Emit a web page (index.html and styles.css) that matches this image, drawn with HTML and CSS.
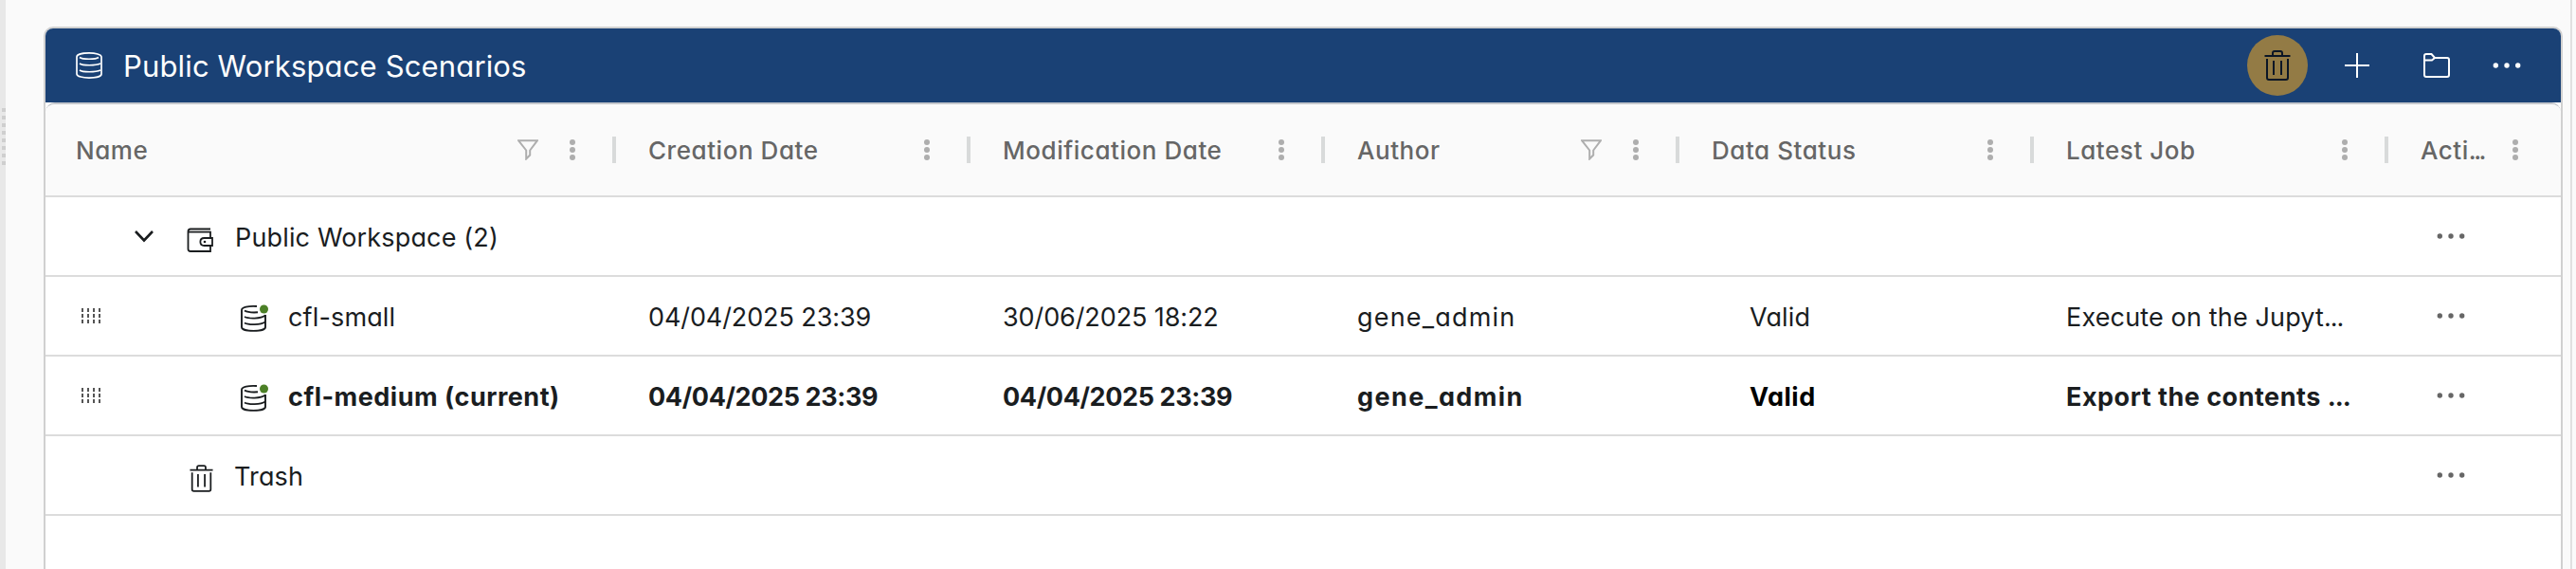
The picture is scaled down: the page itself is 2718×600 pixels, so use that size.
FILE: index.html
```
<!DOCTYPE html>
<html lang="en">
<head>
    <meta charset="UTF-8">
    <meta name="viewport" content="width=device-width, initial-scale=1">
    <title>Public Workspace Scenarios</title>
    <link rel="stylesheet" href="styles.css">
</head>
<body>
    <!-- icon sprites -->
    <svg class="sprites" width="0" height="0">
        <symbol id="i-trash" viewBox="0 0 28 32">
            <path d="M0.5 6H27.5M9 6V3Q9 1 11 1H17Q19 1 19 3V6M3 9V29Q3 31 5 31H23Q25 31 25 29V9M10 11V26M18 11V26"/>
        </symbol>
        <symbol id="i-db" viewBox="0 0 28 28">
            <path d="M1 5C1 -0.4 27 -0.4 27 5V23C27 28.4 1 28.4 1 23Z"/>
            <path d="M4 5.5C7 7.8 21 7.8 24 5.5M4 12C7 14.3 21 14.3 26 12M4 19C7 21.3 21 21.3 26 19"/>
        </symbol>
        <symbol id="i-dbok" viewBox="0 0 30 32">
            <path d="M18 4C9 3.4 2 5 2 8V26C2 31.2 27 31.2 27 26V13"/>
            <path d="M5 8.5C8 10.3 13 10.7 19 10.3M5 15C9 17.2 22 17.5 27 13.5M5 21.5C9 23.8 22 23.8 27 20.5"/>
            <circle class="ok" cx="25.5" cy="7" r="4.5"/>
        </symbol>
        <symbol id="i-wallet" viewBox="0 0 28 26">
            <path d="M25 1.5H4Q1.5 1.5 1.5 4V22.5Q1.5 25 4 25H25V19M1.5 4.7H25V11"/>
            <path d="M27 11H18.5C13 11 13 19 18.5 19H27Z"/>
            <circle class="fill" cx="19" cy="15" r="1.3"/>
        </symbol>
        <symbol id="i-funnel" viewBox="0 0 22 22">
            <path d="M1 1.2H21L13.2 11.5V16.5L9.2 20.5V11.5Z"/>
        </symbol>
        <symbol id="i-dots" viewBox="0 0 30 6">
            <circle class="fill" cx="3.3" cy="3" r="2.7"/>
            <circle class="fill" cx="15" cy="3" r="2.7"/>
            <circle class="fill" cx="26.7" cy="3" r="2.7"/>
        </symbol>
        <symbol id="i-menu" viewBox="0 0 6 22">
            <circle class="fill" cx="3" cy="3" r="3"/>
            <circle class="fill" cx="3" cy="11" r="3"/>
            <circle class="fill" cx="3" cy="19" r="3"/>
        </symbol>
        <symbol id="i-drag" viewBox="0 0 20 16">
            <path d="M1 0V16M7 0V16M13 0V16M19 0V16" stroke-dasharray="4 2"/>
        </symbol>
    </svg>

    <div class="app">
        <div class="splitter"><div class="grip"></div></div>

        <div class="panel">
            <div class="toolbar">
                <svg class="icon db"><use href="#i-db"/></svg>
                <h1>Public Workspace Scenarios</h1>
                <div class="tools">
                    <div class="tool active"><svg class="icon trash-lg"><use href="#i-trash"/></svg></div>
                    <div class="tool"><svg class="icon" width="26" height="26"><path d="M13 0V26M0 13H26"/></svg></div>
                    <div class="tool"><svg class="icon" width="28" height="26"><path d="M1 7.5V3Q1 1 3 1H8.5L12 5H25Q27 5 27 7V23Q27 25 25 25H3Q1 25 1 23V7.5H9L12 5"/></svg></div>
                    <div class="tool narrow"><svg class="icon dots"><use href="#i-dots"/></svg></div>
                </div>
            </div>

            <div class="grid">
                <div class="row head">
                    <div class="cell first"><span>Name</span><svg class="icon funnel"><use href="#i-funnel"/></svg><svg class="icon menu"><use href="#i-menu"/></svg></div>
                    <div class="cell"><span>Creation Date</span><svg class="icon menu"><use href="#i-menu"/></svg></div>
                    <div class="cell"><span>Modification Date</span><svg class="icon menu"><use href="#i-menu"/></svg></div>
                    <div class="cell"><span>Author</span><svg class="icon funnel"><use href="#i-funnel"/></svg><svg class="icon menu"><use href="#i-menu"/></svg></div>
                    <div class="cell"><span>Data Status</span><svg class="icon menu"><use href="#i-menu"/></svg></div>
                    <div class="cell"><span>Latest Job</span><svg class="icon menu"><use href="#i-menu"/></svg></div>
                    <div class="cell last"><span>Acti<span class="more">...</span></span><svg class="icon menu"><use href="#i-menu"/></svg></div>
                </div>

                <div class="row">
                    <div class="cell name">
                        <svg class="icon chevron" width="20" height="12"><path d="M1 1L10 10.5L19 1"/></svg>
                        <svg class="icon wallet"><use href="#i-wallet"/></svg>
                        <span>Public Workspace (2)</span>
                    </div>
                    <div class="cell"></div><div class="cell"></div><div class="cell"></div><div class="cell"></div><div class="cell"></div>
                    <div class="cell actions"><svg class="icon dots"><use href="#i-dots"/></svg></div>
                </div>

                <div class="row">
                    <div class="cell name">
                        <svg class="icon drag"><use href="#i-drag"/></svg>
                        <svg class="icon dbok"><use href="#i-dbok"/></svg>
                        <span>cfl-small</span>
                    </div>
                    <div class="cell"><span class="date">04/04/2025 23:39</span></div>
                    <div class="cell"><span class="date">30/06/2025 18:22</span></div>
                    <div class="cell"><span class="author">gene_admin</span></div>
                    <div class="cell status"><span>Valid</span></div>
                    <div class="cell"><span>Execute on the Jupyt<span class="more">...</span></span></div>
                    <div class="cell actions"><svg class="icon dots"><use href="#i-dots"/></svg></div>
                </div>

                <div class="row current">
                    <div class="cell name">
                        <svg class="icon drag"><use href="#i-drag"/></svg>
                        <svg class="icon dbok"><use href="#i-dbok"/></svg>
                        <span>cfl-medium (current)</span>
                    </div>
                    <div class="cell"><span class="date">04/04/2025 23:39</span></div>
                    <div class="cell"><span class="date">04/04/2025 23:39</span></div>
                    <div class="cell"><span class="author">gene_admin</span></div>
                    <div class="cell status"><span>Valid</span></div>
                    <div class="cell"><span>Export the contents <span class="more">...</span></span></div>
                    <div class="cell actions"><svg class="icon dots"><use href="#i-dots"/></svg></div>
                </div>

                <div class="row">
                    <div class="cell name trash">
                        <svg class="icon trash-sm"><use href="#i-trash"/></svg>
                        <span>Trash</span>
                    </div>
                    <div class="cell"></div><div class="cell"></div><div class="cell"></div><div class="cell"></div><div class="cell"></div>
                    <div class="cell actions"><svg class="icon dots"><use href="#i-dots"/></svg></div>
                </div>
            </div>
        </div>
        <div class="edge"></div>
    </div>
</body>
</html>
```

FILE: styles.css
```
* {
    box-sizing: border-box;
}

body {
    margin: 0;
    background-color: #fafafa;
    color: #1a1d1f;
    font-family: Inter, "Open Sans", sans-serif;
    font-size: 27px;
    font-weight: 400;
    letter-spacing: 0.15px;
    font-feature-settings: "cv11" 1, "calt" 0;
    overflow: hidden;
}

.sprites {
    display: none;
}

.app {
    display: flex;
    height: 600px;
}

.splitter {
    width: 6px;
    margin-right: 40px;
    padding: 114px 0 0 2px;
    background-color: #e8e8e8;
}

.grip {
    height: 60px;
    background: repeating-linear-gradient(#cfcfcf 0 4px, transparent 4px 8px);
}

.panel {
    display: flex;
    flex-direction: column;
    width: 2658px;
    height: 572px;
    margin-top: 28px;
    border: 2px solid #d0d0d0;
    border-bottom: 0;
    border-radius: 10px 10px 0 0;
    background-color: #fff;
    overflow: hidden;
}

.edge {
    width: 2px;
    margin-left: 8px;
    background-color: #e0e0e0;
}

.icon {
    display: block;
    flex: none;
    fill: none;
    stroke: currentColor;
    stroke-width: 2;
    overflow: visible;
}

.fill {
    fill: currentColor;
    stroke: none;
}

.ok {
    fill: #4c8027;
    stroke: none;
}

.toolbar {
    display: flex;
    align-items: center;
    height: 78px;
    flex: none;
    padding: 0 25px 0 32px;
    background-color: #1a4175;
    color: #fff;
}

h1 {
    margin: 0 0 0 22px;
    padding-top: 1px;
    font-size: 31px;
    font-weight: 400;
    line-height: 40px;
}

.db {
    width: 28px;
    height: 28px;
    stroke-width: 1.7;
}

.tools {
    display: flex;
    gap: 20px;
    margin-left: auto;
}

.tool {
    display: flex;
    align-items: center;
    justify-content: center;
    width: 64px;
    height: 64px;
    border-radius: 50%;
}

.tool.narrow {
    margin-left: -10px;
}

.tool.active {
    background-color: #937b45;
    color: #0b1626;
}

.trash-lg {
    width: 28px;
    height: 32px;
}

.dots {
    width: 30px;
    height: 6px;
}

.grid {
    flex: 1;
    border-top: 2px solid #c4c7cc;
    border-radius: 10px 10px 0 0;
}

.row {
    display: grid;
    grid-template-columns: 600px repeat(5, 374px) 184px;
    height: 84px;
    border-bottom: 2px solid #dcdcdc;
}

.cell {
    display: flex;
    align-items: center;
    min-width: 0;
    padding-left: 36px;
    white-space: nowrap;
    line-height: 36px;
}

.cell > span {
    padding-top: 3px;
}

.row.head {
    height: 98px;
    border-radius: 10px 10px 0 0;
    background-color: #fafafa;
    color: #666;
    font-size: 26px;
    font-weight: 500;
    letter-spacing: 0.55px;
}

.head .cell {
    position: relative;
    padding-right: 41px;
}

.head .cell > span {
    padding-top: 2px;
}

.head .first {
    padding-left: 32px;
}

/* column resize handle */
.head .cell:not(.last)::after {
    content: "";
    position: absolute;
    right: -2px;
    top: 34px;
    width: 4px;
    height: 28px;
    background-color: #d8dada;
}

.head .last {
    padding-right: 45px;
}

.head .icon {
    color: #aeaeae;
}

.more {
    letter-spacing: -1px;
}

.head .more {
    letter-spacing: -2.5px;
}

.menu {
    width: 6px;
    height: 22px;
    margin-left: auto;
}

.funnel {
    width: 22px;
    height: 22px;
    margin-left: auto;
}

.funnel + .menu {
    margin-left: 33px;
}

.row .name {
    padding-left: 38px;
}

.chevron {
    margin-left: 56px;
    stroke-width: 2.6;
}

.wallet {
    width: 28px;
    height: 26px;
    margin: 8px 23px 0 35px;
    stroke-width: 1.8;
}

.drag {
    width: 20px;
    height: 16px;
    color: #555;
}

.dbok {
    width: 30px;
    height: 32px;
    margin: 4px 21px 0 147px;
    stroke-width: 1.9;
}

.row .trash {
    padding-left: 152px;
}

.trash-sm {
    width: 25px;
    height: 29px;
    margin: 6px 22px 0 0;
}

.date {
    letter-spacing: -0.1px;
}

.author {
    letter-spacing: 1.2px;
}

.row .status {
    padding-left: 76px;
}

.row .actions {
    padding-left: 53px;
    color: #666;
}

.current {
    font-weight: 700;
    letter-spacing: 0.5px;
}

.current .author {
    letter-spacing: 1.4px;
}

.current .date {
    letter-spacing: -0.38px;
}

.current .status {
    color: #000;
}
```
